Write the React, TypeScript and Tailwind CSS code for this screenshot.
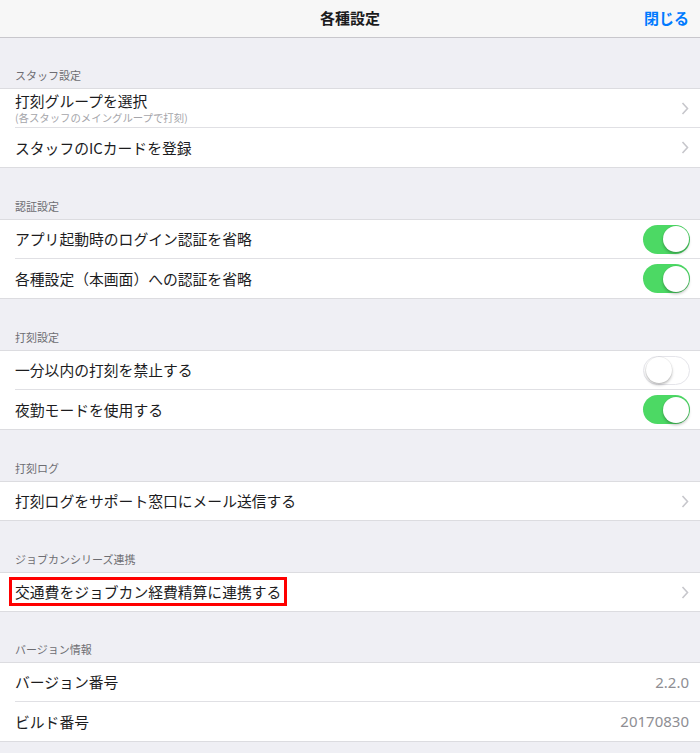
import type { ReactNode } from 'react';

const font = { fontFamily: '"Noto Sans CJK JP", "Noto Sans", sans-serif' };

type Row = {
    label: ReactNode;
    sub?: string;
    right?: 'chevron' | 'on' | 'off';
    value?: string;
};

type Section = {
    title: string;
    head: string;
    rows: Row[];
};

const sections: Section[] = [
    {
        title: 'スタッフ設定',
        head: 'h-[50px]',
        rows: [
            { label: '打刻グループを選択', sub: '(各スタッフのメイングループで打刻)', right: 'chevron' },
            { label: 'スタッフのICカードを登録', right: 'chevron' },
        ],
    },
    {
        title: '認証設定',
        head: 'h-[51px]',
        rows: [
            { label: 'アプリ起動時のログイン認証を省略', right: 'on' },
            { label: '各種設定（本画面）への認証を省略', right: 'on' },
        ],
    },
    {
        title: '打刻設定',
        head: 'h-[51px]',
        rows: [
            { label: '一分以内の打刻を禁止する', right: 'off' },
            { label: '夜勤モードを使用する', right: 'on' },
        ],
    },
    {
        title: '打刻ログ',
        head: 'h-[51px]',
        rows: [{ label: '打刻ログをサポート窓口にメール送信する', right: 'chevron' }],
    },
    {
        title: 'ジョブカンシリーズ連携',
        head: 'h-[51px]',
        rows: [
            {
                label: (
                    <span className="-ml-[6px] border-[3px] border-[#ff0000] px-[3px] py-px">交通費をジョブカン経費精算に連携する</span>
                ),
                right: 'chevron',
            },
        ],
    },
    {
        title: 'バージョン情報',
        head: 'h-[50px]',
        rows: [
            { label: 'バージョン番号', value: '2.2.0' },
            { label: 'ビルド番号', value: '20170830' },
        ],
    },
];

function Chevron() {
    return (
        <svg width="8" height="13" viewBox="0 0 8 13" className="mr-[11px]">
            <polyline points="1.5,1 6.5,6.5 1.5,12" fill="none" stroke="#c7c7cc" strokeWidth="1.6" />
        </svg>
    );
}

function Toggle({ on }: { on: boolean }) {
    return (
        <div
            className={`mr-[10px] flex h-[29px] w-[47px] items-center rounded-full p-[1.5px] ${
                on ? 'justify-end bg-[#4cd964]' : 'justify-start border border-[#e5e5ea] bg-white'
            }`}
        >
            <div className="h-[26px] w-[26px] rounded-full bg-white shadow-[0_2px_3px_rgba(0,0,0,0.25),0_0_0_0.5px_rgba(0,0,0,0.08)]" />
        </div>
    );
}

export default function App() {
    return (
        <div className="min-h-[753px] w-[700px] bg-[#efeff4] text-[#1c1c1e]" style={font}>
            {/* Nav bar */}
            <div className="relative flex h-[38px] items-center justify-center border-b border-[#c8c7cc] bg-[#f7f7f7]">
                <span className="text-[15px] font-bold">各種設定</span>
                <span className="absolute right-[11px] text-[15px] font-bold text-[#007aff]">閉じる</span>
            </div>

            {sections.map((section) => (
                <div key={section.title}>
                    <div className={`flex items-end pb-[6px] pl-[15px] ${section.head}`}>
                        <span className="text-[11px] leading-[14px] text-[#6d6d72]">{section.title}</span>
                    </div>
                    <div className="border-y border-[#dcdce0] bg-white">
                        {section.rows.map((row, i) => {
                            const last = i === section.rows.length - 1;
                            const h = section.rows.length === 1 ? 'h-[38px]' : 'h-[39px]';
                            return (
                                <div key={i} className={`pl-[15px] ${h}`}>
                                    <div className={`flex h-full items-center ${last ? '' : 'border-b border-[#e0e0e4]'}`}>
                                        <div className={`flex flex-1 flex-col justify-center ${row.sub ? 'gap-[2px] pt-px' : ''}`}>
                                            <span className={`text-[14.8px] ${row.sub ? 'leading-[16px]' : 'leading-[20px]'}`}>
                                                {row.label}
                                            </span>
                                            {row.sub && <span className="text-[10.4px] leading-[14px] text-[#a5a5aa]">{row.sub}</span>}
                                        </div>
                                        {row.right === 'chevron' && <Chevron />}
                                        {row.right === 'on' && <Toggle on />}
                                        {row.right === 'off' && <Toggle on={false} />}
                                        {row.value && (
                                            <span className="mr-[11px] text-[15px] text-[#8e8e93]" style={{ fontFamily: '"Noto Sans", sans-serif' }}>
                                                {row.value}
                                            </span>
                                        )}
                                    </div>
                                </div>
                            );
                        })}
                    </div>
                </div>
            ))}
        </div>
    );
}
